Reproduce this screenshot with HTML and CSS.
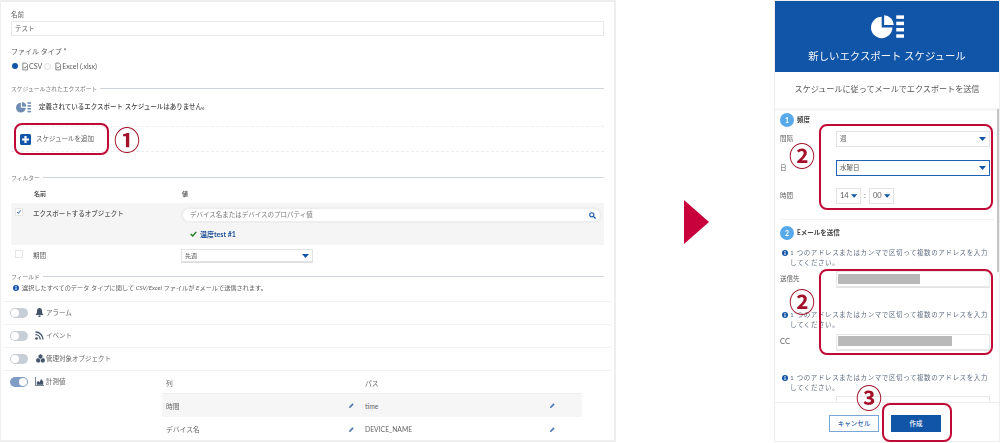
FILE: index.html
```html
<!DOCTYPE html>
<html lang="ja">
<head>
<meta charset="utf-8">
<title>エクスポート スケジュール</title>
<link rel="stylesheet" href="styles.css">
</head>
<body>
<svg class="defs" width="0" height="0">
  <defs>
    <symbol id="sched" viewBox="0 0 34 24">
      <path d="M11 1.500v11h11A11 11 0 1 1 11 1.500z"/>
      <path d="M13.500 0A10.500 10.500 0 0 1 23.500 10H13.500z"/>
      <rect x="26" y="0" width="8" height="3.600"/>
      <rect x="26" y="6.500" width="8" height="3.600"/>
      <rect x="26" y="13" width="8" height="3.600"/>
      <rect x="26" y="19.500" width="8" height="3.600"/>
    </symbol>
    <symbol id="doc" viewBox="0 0 7 9">
      <path d="M1 .5h3.500l2 2v6H1z" fill="none" stroke="#555" stroke-width=".8"/>
      <path d="M2 5l1.300 1.500L5.500 4" fill="none" stroke="#555" stroke-width=".8"/>
    </symbol>
    <symbol id="info" viewBox="0 0 8 8">
      <circle cx="4" cy="4" r="4" fill="#1155a8"/>
      <rect x="3.300" y="1.300" width="1.400" height="1.300" fill="#fff"/>
      <rect x="3.300" y="3.300" width="1.400" height="3.300" fill="#fff"/>
    </symbol>
    <symbol id="pencil" viewBox="0 0 6 6">
      <path d="M0 6l.4-1.800L4.200.4l1.400 1.400L1.800 5.600z" fill="#4a78b8"/>
    </symbol>
    <symbol id="caret" viewBox="0 0 7 4">
      <path d="M0 0h7L3.500 4z" fill="#1155a8"/>
    </symbol>
  </defs>
</svg>

<div class="stage">
  <main class="panel">
    <div class="form">
      <div class="label first">名前</div>
      <div class="input name-input">テスト</div>
      <div class="label type-label">ファイル タイプ *</div>
      <div class="radios">
        <span class="radio on"></span>
        <svg class="doc"><use href="#doc"/></svg><span class="radio-text">CSV</span>
        <span class="radio"></span>
        <svg class="doc"><use href="#doc"/></svg><span class="radio-text">Excel (.xlsx)</span>
      </div>
      <div class="legend sched-legend"><span>スケジュールされたエクスポート</span></div>
      <div class="empty">
        <svg class="empty-icon"><use href="#sched"/></svg>
        <strong>定義されているエクスポート スケジュールはありません。</strong>
      </div>
      <div class="add-row">
        <svg class="plus" viewBox="0 0 11 11">
          <rect width="11" height="11" rx="1.500" fill="#1155a8"/>
          <path d="M4.400 2h2.200v2.400H9v2.200H6.600V9H4.400V6.600H2V4.400h2.400z" fill="#fff"/>
        </svg>
        <span>スケジュールを追加</span>
      </div>
      <div class="legend filter-legend"><span>フィルター</span></div>
      <div class="filter-head"><span>名前</span><span>値</span></div>
      <div class="filter-row grey">
        <span class="check"><svg viewBox="0 0 8 8"><path d="M1.500 4l1.700 1.800 3-4" fill="none" stroke="#1155a8" stroke-width="1.200"/></svg></span>
        <span class="filter-name strong">エクスポートするオブジェクト</span>
        <div class="filter-value">
          <div class="search">
            <span>デバイス名またはデバイスのプロパティ値</span>
            <svg viewBox="0 0 8 8"><circle cx="3.200" cy="3.200" r="2.400" fill="none" stroke="#1155a8" stroke-width="1.300"/><path d="M5 5l2.500 2.500" stroke="#1155a8" stroke-width="1.500"/></svg>
          </div>
          <div class="tree">
            <svg viewBox="0 0 8 7"><path d="M.8 3.500l2.200 2.300L7.200 1" fill="none" stroke="#1f7a1f" stroke-width="1.600"/></svg>
            <span>温度test #1</span>
          </div>
        </div>
      </div>
      <div class="filter-row short">
        <span class="check"></span>
        <span class="filter-name">期間</span>
        <div class="filter-value">
          <div class="select period"><span>先週</span><svg class="caret"><use href="#caret"/></svg></div>
        </div>
      </div>
      <div class="legend field-legend"><span>フィールド</span></div>
      <div class="field-info">
        <svg class="info"><use href="#info"/></svg>
        <span>選択したすべてのデータ タイプに関して <em>CSV/Excel</em> ファイルが <em>E</em>メールで送信されます。</span>
      </div>
    </div>
    <div class="fields">
      <div class="field">
        <span class="toggle"></span>
        <svg class="field-icon" viewBox="0 0 9 9"><path d="M4.500 0C6 0 7 1.200 7 3c0 2 .6 3 1.500 4h-8C1.400 6 2 5 2 3c0-1.800 1-3 2.500-3z" fill="#44536a"/><rect x="3.500" y="7.500" width="2" height="1.500" fill="#44536a"/></svg>
        <span>アラーム</span>
      </div>
      <div class="field">
        <span class="toggle"></span>
        <svg class="field-icon" viewBox="0 0 9 9"><circle cx="1.500" cy="7.500" r="1.300" fill="#44536a"/><path d="M.5 3.700A5 5 0 0 1 5.300 8.500M.5 1A7.500 7.500 0 0 1 8 8.500" fill="none" stroke="#44536a" stroke-width="1.300"/></svg>
        <span>イベント</span>
      </div>
      <div class="field">
        <span class="toggle"></span>
        <svg class="field-icon wide" viewBox="0 0 11 10"><path d="M5.500 0l2.500 1.500v3L5.500 6 3 4.500v-3zM3 4l2.500 1.500V8.500L3 10 .5 8.500v-3zM8 4l2.500 1.500v3L8 10 5.500 8.500v-3z" fill="#44536a" stroke="#fff" stroke-width=".5"/></svg>
        <span>管理対象オブジェクト</span>
      </div>
      <div class="field last">
        <span class="toggle on"></span>
        <svg class="field-icon" viewBox="0 0 9 9"><path d="M.4 0v8.600H9" fill="none" stroke="#44536a" stroke-width=".8"/><path d="M1.800 7.800V5l1.500-1 1.300 1.200L6 2l2.200 2.500v3.300z" fill="#44536a"/></svg>
        <span>計測値</span>
        <div class="measure">
          <div class="cell head">列</div><div class="cell head">パス</div>
          <div class="cell shade first-col">時間<svg class="pencil"><use href="#pencil"/></svg></div>
          <div class="cell shade second-col">time<svg class="pencil"><use href="#pencil"/></svg></div>
          <div class="cell first-col">デバイス名<svg class="pencil"><use href="#pencil"/></svg></div>
          <div class="cell second-col">DEVICE_NAME<svg class="pencil"><use href="#pencil"/></svg></div>
        </div>
      </div>
    </div>
  </main>

  <div class="arrow-col"><span class="arrow"></span></div>

  <aside class="modal">
    <header class="modal-head">
      <svg class="head-icon"><use href="#sched"/></svg>
      <h1>新しいエクスポート スケジュール</h1>
    </header>
    <p class="modal-sub">スケジュールに従ってメールでエクスポートを送信</p>
    <div class="modal-body">
      <section class="step step-one">
        <div class="step-title"><span class="badge">1</span><b>頻度</b></div>
        <div class="m-row interval"><label>間隔</label><div class="select wide-select"><span>週</span><svg class="caret"><use href="#caret"/></svg></div></div>
        <div class="m-row day"><label>日</label><div class="select wide-select focus"><span>水曜日</span><svg class="caret"><use href="#caret"/></svg></div></div>
        <div class="m-row hour"><label>時間</label>
          <div class="time">
            <div class="select mini"><span>14</span><svg class="caret"><use href="#caret"/></svg></div>
            <span>:</span>
            <div class="select mini"><span>00</span><svg class="caret"><use href="#caret"/></svg></div>
          </div>
        </div>
      </section>
      <section class="step step-two">
        <div class="step-title"><span class="badge">2</span><b>Eメールを送信</b></div>
        <div class="hint top"><svg class="info"><use href="#info"/></svg><span>1 つのアドレスまたはカンマで区切って複数のアドレスを入力してください。</span></div>
        <div class="m-row addr"><label>送信先</label><div class="input addr-input"><span class="mask to"></span></div></div>
        <div class="hint"><svg class="info"><use href="#info"/></svg><span>1 つのアドレスまたはカンマで区切って複数のアドレスを入力してください。</span></div>
        <div class="m-row addr cc"><label class="cc-label">CC</label><div class="input addr-input"><span class="mask ccm"></span></div></div>
        <div class="hint"><svg class="info"><use href="#info"/></svg><span>1 つのアドレスまたはカンマで区切って複数のアドレスを入力してください。</span></div>
        <div class="m-row addr"><label></label><div class="input addr-input"></div></div>
      </section>
      <span class="scrollbar"></span>
    </div>
    <footer class="modal-foot">
      <button class="btn ghost">キャンセル</button>
      <button class="btn solid">作成</button>
    </footer>
  </aside>

  <span class="mark box-add"></span>
  <span class="mark box-freq"></span>
  <span class="mark box-mail"></span>
  <span class="mark box-create"></span>
  <span class="num n1">①</span>
  <span class="num n2a">②</span>
  <span class="num n2b">②</span>
  <span class="num n3">③</span>
</div>
</body>
</html>
```
FILE: styles.css
```css
* { box-sizing: border-box; }
html, body { margin: 0; padding: 0; background: #fff; }
body { font-family: Lato, "Noto Sans CJK JP", "Noto Sans", sans-serif; font-size: 6.500px; line-height: 10px; color: #5c5c5c; overflow: hidden; }
.defs { position: absolute; }
.stage { position: relative; display: flex; width: 1000px; height: 443px; overflow: hidden; filter: blur(.3px); }

/* left panel */
.panel { width: 616px; height: 442px; border: 2px solid #eee; border-left-width: 1px; flex: none; overflow: hidden; }
.form { padding: 8px 10px 0 10px; }
.label { height: 10px; }
.first { height: 11px; }
.input { background: #fff; border: 1px solid #e8e8e8; }
.name-input { height: 15px; padding: 2px 3px; font-size: 6.500px; }
.type-label { margin-top: 10px; font-size: 7px; }
.radios { display: flex; align-items: center; height: 12px; margin-top: 4px; font-size: 7px; }
.radio { width: 7px; height: 7px; border: 1px solid #ddd; border-radius: 50%; margin: 0 4px 0 2px; background: #fff; }
.radio.on { width: 6px; height: 6px; background: #1155a8; border: 0; margin: 0 4px 0 1px; }
.doc { width: 6px; height: 9px; }
.radio-text { margin-left: 1px; }
.legend { display: flex; align-items: center; gap: 3px; height: 11px; font-size: 5.800px; color: #777; }
.legend::after { content: ""; flex: 1; height: 1px; background: #cdd3d8; }
.sched-legend { margin-top: 11px; }
.empty { display: flex; align-items: center; height: 14px; margin-top: 6px; padding-left: 5px; color: #444; }
.empty strong { font-weight: 500; margin-left: 8px; }
.empty-icon { width: 15px; height: 11px; fill: #6f8cb2; }
.add-row { display: flex; align-items: center; height: 26px; margin-top: 12px; padding-left: 9px; border-top: 1px dashed #eee; border-bottom: 1px dashed #eee; }
.plus { width: 11px; height: 11px; margin-right: 5px; }
.filter-legend { margin-top: 20px; }
.filter-head { display: grid; grid-template-columns: 148px 1fr; height: 10px; margin: 6px 0 4px; padding-left: 23px; font-weight: 700; font-size: 6px; color: #555; }
.filter-row { display: grid; grid-template-columns: 22px 148px 1fr; padding-top: 4px; }
.grey { background: #f5f5f5; height: 42px; }
.short { height: 25px; }
.check { display: block; width: 8px; height: 8px; margin: 1px 0 0 4px; background: #fff; border: 1px solid #e6e6e6; }
.check svg { display: block; width: 6px; height: 6px; }
.filter-name { line-height: 14px; }
.strong { font-weight: 500; color: #555; }
.search { display: flex; justify-content: space-between; align-items: center; height: 16px; width: 421px; padding: 0 4px 0 7px; border: 2px solid #eee; border-radius: 8px; background: #fff; color: #777; }
.search svg { width: 7px; height: 7px; }
.tree { display: flex; align-items: center; gap: 3px; margin: 6px 0 0 9px; font-weight: 700; font-size: 7px; color: #1d4f96; }
.tree svg { width: 7px; height: 6px; }
.select { display: flex; align-items: center; justify-content: space-between; background: #fff; border: 1px solid #e3e3e3; padding: 0 3px; }
.period { width: 132px; height: 13px; font-size: 6px; box-shadow: 0 1px 0 #ddd; }
.caret { width: 7px; height: 4px; }
.field-legend { margin-top: 1px; }
.field-info { display: flex; align-items: center; gap: 3px; height: 10px; margin-top: 1px; padding-left: 2px; font-size: 6.200px; }
.info { width: 6px; height: 6px; flex: none; }
.fields { margin: 8px 2px 0 2px; }
.field { position: relative; display: flex; align-items: flex-start; height: 23px; padding: 6px 0 0 7px; border-top: 1px solid #f2f2f2; color: #666; }
.toggle { position: relative; width: 18px; height: 10px; border-radius: 5px; background: #c8ced5; margin-right: 7px; }
.toggle::after { content: ""; position: absolute; left: 1px; top: 1px; width: 8px; height: 8px; border-radius: 50%; background: #fff; }
.toggle.on { background: #7f9cc4; }
.toggle.on::after { left: 9px; }
.field-icon { width: 9px; height: 9px; margin-right: 2px; }
.field-icon.wide { width: 11px; margin-right: 0; }
.field.last { height: 71px; }
.measure { position: absolute; left: 159px; top: 0; display: grid; grid-template-columns: 199px 221px; grid-template-rows: 22px 24px 24px; width: 420px; font-size: 6.800px; }
.head { padding-top: 2px; }
.cell { display: flex; justify-content: space-between; align-items: center; padding-left: 4px; padding-right: 4px; }
.shade { background: #f6f6f6; border-top: 1px solid #eee; }
.first-col { padding-right: 7px; }
.second-col { padding-right: 27px; }
.pencil { width: 5px; height: 5px; }

/* arrow */
.arrow-col { flex: 1; display: flex; align-items: center; justify-content: center; padding-left: 2px; height: 443px; }
.arrow { width: 0; height: 0; border-left: 25px solid #c8003c; border-top: 22px solid transparent; border-bottom: 22px solid transparent; }

/* modal */
.modal { display: flex; flex-direction: column; width: 226px; height: 442px; flex: none; border: 1px solid #eee; overflow: hidden; }
.modal-head { height: 71px; background: #1155a8; color: #fff; text-align: center; padding-top: 14px; flex: none; }
.head-icon { display: block; width: 33px; height: 24px; margin: 0 auto; fill: #fff; }
.modal-head h1 { margin: 10px 0 0; font-size: 10.400px; line-height: 14px; font-weight: 400; color: #f2f5fa; }
.modal-sub { margin: 0; height: 36px; flex: none; text-align: center; font-size: 8.100px; line-height: 34px; color: #555; }
.modal-body { position: relative; flex: 1; overflow: hidden; padding: 5px 5px 0 5px; background: #fff; }
.modal-body::before { content: ""; position: absolute; inset: 0 0 auto 0; height: 3px; background: #f6f6f6; }
.step-title { display: flex; align-items: center; height: 14px; gap: 3px; color: #444; }
.step-title b { font-weight: 700; }
.badge { width: 14px; height: 14px; border-radius: 50%; background: #58a9ea; color: #fff; text-align: center; line-height: 14px; font-size: 7px; font-weight: 700; }
.m-row { display: flex; align-items: center; }
.m-row label { width: 56px; flex: none; }
.cc-label { font-size: 7.500px; }
.step-one { height: 107px; border-bottom: 1px solid #f1f1f1; }
.step-one .m-row { height: 16px; }
.step-one .interval { margin-top: 4px; }
.step-one .day { margin-top: 13px; }
.step-one .hour { margin-top: 12px; }
.wide-select { width: 154px; height: 16px; }
.focus { border: 1px solid #1e63b5; }
.time { display: flex; align-items: center; gap: 3px; font-size: 7.500px; }
.mini { width: 25px; height: 16px; gap: 2px; }
.step-two { padding-top: 6px; }
.hint { display: flex; gap: 2px; margin-top: 23px; padding-left: 2px; width: 210px; color: #5f6d80; letter-spacing: .6px; }
.hint.top { margin-top: 8px; }
.hint .info { margin-top: 2px; }
.addr { margin-top: 3px; height: 16px; }
.addr.cc { margin-top: 4px; }
.addr-input { width: 154px; height: 16px; padding: 2px 1px; box-shadow: 0 1px 0 #e4e4e4; }
.mask { display: block; height: 10px; background: #b9b9b9; }
.mask.to { width: 82px; }
.mask.ccm { width: 114px; margin-top: -1px; }
.scrollbar { position: absolute; right: 0; top: 1px; width: 2px; height: 163px; background: #c4c4c4; }
.modal-foot { display: flex; gap: 12px; height: 39px; flex: none; padding: 12px 0 0 54px; background: #fff; border-top: 1px solid #eee; position: relative; }
.btn { width: 50px; height: 17px; padding: 0; font: 500 6.500px/1 "Noto Sans CJK JP", sans-serif; border-radius: 0; }
.ghost { background: #fff; color: #1d5aa8; border: 1px solid #7da6d8; }
.solid { background: #1155a8; color: #fff; border: 1px solid #1155a8; }

/* annotations */
.mark { position: absolute; border: 2px solid #c00a35; border-radius: 8px; }
.box-add { left: 14px; top: 123px; width: 95px; height: 32px; }
.box-freq { left: 819px; top: 124px; width: 174px; height: 86px; }
.box-mail { left: 819px; top: 269px; width: 174px; height: 86px; }
.box-create { left: 882px; top: 403px; width: 70px; height: 39px; }
.num { position: absolute; width: 26px; height: 26px; margin: -13px 0 0 -13px; text-align: center; font: 700 26px/26px "Noto Sans CJK JP", sans-serif; color: #a3122a; }
.n1 { left: 127px; top: 139px; }
.n2a { left: 802px; top: 155px; }
.n2b { left: 802px; top: 301px; }
.n3 { left: 869px; top: 397px; }
```
